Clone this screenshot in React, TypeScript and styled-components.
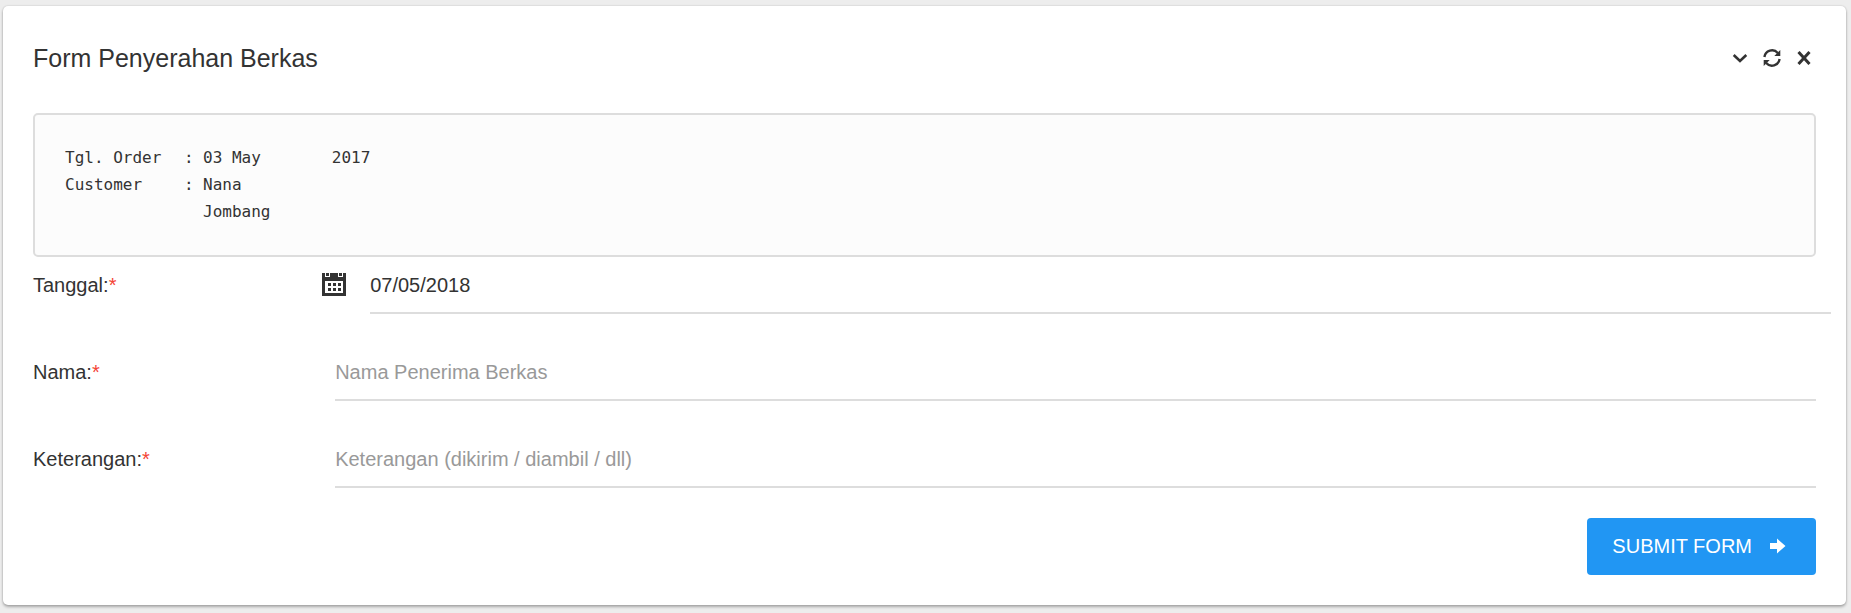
import React from "react";
import styled, { createGlobalStyle } from "styled-components";

const GlobalStyle = createGlobalStyle`
  * { box-sizing: border-box; }
  body {
    margin: 0;
    background: #ededed;
    color: #333;
    font-family: "Liberation Sans", Arial, sans-serif;
    font-size: 20px;
    line-height: 30px;
  }
`;

const Page = styled.main`
  padding: 6px 5px 8px 3px;
`;

const Panel = styled.section`
  background: #fff;
  border-radius: 5px;
  box-shadow: 0 2px 3px rgba(0, 0, 0, 0.28), 0 0 2px rgba(0, 0, 0, 0.18);
`;

const PanelHeading = styled.header`
  display: flex;
  align-items: center;
  justify-content: space-between;
  height: 107px;
  padding: 0 30px 3px;
`;

const PanelTitle = styled.h1`
  margin: 0;
  font-size: 25px;
  font-weight: 400;
  line-height: 40px;
`;

const PanelActions = styled.div`
  display: flex;
  gap: 8px;
`;

const IconButton = styled.button`
  display: flex;
  align-items: center;
  justify-content: center;
  width: 24px;
  height: 24px;
  padding: 0;
  border: 0;
  background: none;
  color: #333;
  cursor: pointer;
`;

const PanelBody = styled.div`
  padding: 0 30px 30px;
`;

const OrderInfo = styled.dl`
  display: grid;
  grid-template-columns: 119px 19px 1fr;
  margin: 0;
  padding: 29px 30px 30px;
  border: 2px solid #ddd;
  border-radius: 5px;
  background: #fcfcfc;
  font-family: "DejaVu Sans Mono", monospace;
  font-size: 16px;
  line-height: 27px;
`;

const OrderTerm = styled.dt``;

const OrderValue = styled.dd`
  margin: 0;
`;

const OrderAddress = styled(OrderValue)`
  grid-column: 3;
`;

const OrderYear = styled.span`
  display: inline-block;
  margin-left: 71px;
`;

const Fields = styled.form`
  display: flex;
  flex-direction: column;
  gap: 30px;
`;

const FieldRow = styled.div`
  display: grid;
  grid-template-columns: 2fr 10fr;
  margin: 0 -15px;
`;

const FieldLabel = styled.label`
  padding: 13px 15px;
`;

const Required = styled.span`
  color: #f44336;
`;

const FieldControl = styled.div`
  padding: 0 15px;
`;

const InputGroup = styled.div`
  display: flex;
  align-items: center;
`;

const GroupIcon = styled.span`
  display: flex;
  padding: 0 24px 3px 2px;
`;

const TextInput = styled.input`
  display: block;
  flex: 1;
  width: 100%;
  min-width: 0;
  height: 57px;
  padding: 2px 0 0;
  border: 0;
  border-bottom: 2px solid #ddd;
  outline: 0;
  background: transparent;
  color: #333;
  font: inherit;
  &::placeholder { color: #999; opacity: 1; }
`;

const FormActions = styled.div`
  display: flex;
  justify-content: flex-end;
`;

const SubmitButton = styled.button`
  display: flex;
  align-items: center;
  gap: 18px;
  height: 57px;
  padding: 0 30px 2px 25px;
  border: 0;
  border-radius: 4px;
  background: #2196f3;
  color: #fff;
  font: inherit;
  text-transform: uppercase;
  cursor: pointer;
`;

const CalendarIcon = () => (
  <svg width="24" height="24" viewBox="0 0 24 24" fill="#333" fillRule="evenodd" aria-hidden="true">
    <path d="M0 1H3V5H8V1H16V5H21V1H24V24H0ZM3 9V21H21V9Z" />
    <path d="M4 1H7V4H4ZM17 1H20V4H17ZM6 11H9V14H6ZM11 11H14V14H11ZM16 11H19V14H16ZM6 16H9V19H6ZM11 16H14V19H11ZM16 16H19V19H16Z" />
  </svg>
);

const ChevronIcon = () => (
  <svg width="16" height="16" viewBox="0 0 16 16" fill="none" stroke="currentColor" strokeWidth="2.6" aria-hidden="true">
    <path d="M1.7 5 8 11 14.3 5" />
  </svg>
);

const ReloadIcon = () => (
  <svg width="18" height="18" viewBox="0 0 18 18" aria-hidden="true">
    <path d="M1.4 8A7.7 7.7 0 0 1 14.8 4M16.6 10A7.7 7.7 0 0 1 3.2 14" fill="none" stroke="currentColor" strokeWidth="2.4" />
    <path d="M17.3 1V7H11.3ZM.7 17V11H6.7Z" fill="currentColor" />
  </svg>
);

const CloseIcon = () => (
  <svg width="14" height="14" viewBox="0 0 14 14" fill="none" stroke="currentColor" strokeWidth="3" aria-hidden="true">
    <path d="M1.5 1 12.5 13M12.5 1 1.5 13" />
  </svg>
);

const ArrowIcon = () => (
  <svg width="16" height="16" viewBox="0 0 16 16" fill="currentColor" aria-hidden="true">
    <path d="M0 5H7V.5L15.5 8 7 15.5V11H0Z" />
  </svg>
);

export default function App() {
  return (
    <>
      <GlobalStyle />
      <Page>
        <Panel>
          <PanelHeading>
            <PanelTitle>Form Penyerahan Berkas</PanelTitle>
            <PanelActions>
              <IconButton type="button" aria-label="Collapse"><ChevronIcon /></IconButton>
              <IconButton type="button" aria-label="Reload"><ReloadIcon /></IconButton>
              <IconButton type="button" aria-label="Close"><CloseIcon /></IconButton>
            </PanelActions>
          </PanelHeading>
          <PanelBody>
            <OrderInfo>
              <OrderTerm>Tgl. Order</OrderTerm>
              <span>:</span>
              <OrderValue>03 May<OrderYear>2017</OrderYear></OrderValue>
              <OrderTerm>Customer</OrderTerm>
              <span>:</span>
              <OrderValue>Nana</OrderValue>
              <OrderAddress>Jombang</OrderAddress>
            </OrderInfo>
            <Fields onSubmit={(event) => event.preventDefault()}>
              <FieldRow>
                <FieldLabel htmlFor="tanggal">Tanggal:<Required>*</Required></FieldLabel>
                <InputGroup>
                  <GroupIcon><CalendarIcon /></GroupIcon>
                  <TextInput id="tanggal" type="text" defaultValue="07/05/2018" />
                </InputGroup>
              </FieldRow>
              <FieldRow>
                <FieldLabel htmlFor="nama">Nama:<Required>*</Required></FieldLabel>
                <FieldControl>
                  <TextInput id="nama" type="text" placeholder="Nama Penerima Berkas" />
                </FieldControl>
              </FieldRow>
              <FieldRow>
                <FieldLabel htmlFor="keterangan">Keterangan:<Required>*</Required></FieldLabel>
                <FieldControl>
                  <TextInput id="keterangan" type="text" placeholder="Keterangan (dikirim / diambil / dll)" />
                </FieldControl>
              </FieldRow>
              <FormActions>
                <SubmitButton type="submit">Submit form<ArrowIcon /></SubmitButton>
              </FormActions>
            </Fields>
          </PanelBody>
        </Panel>
      </Page>
    </>
  );
}
